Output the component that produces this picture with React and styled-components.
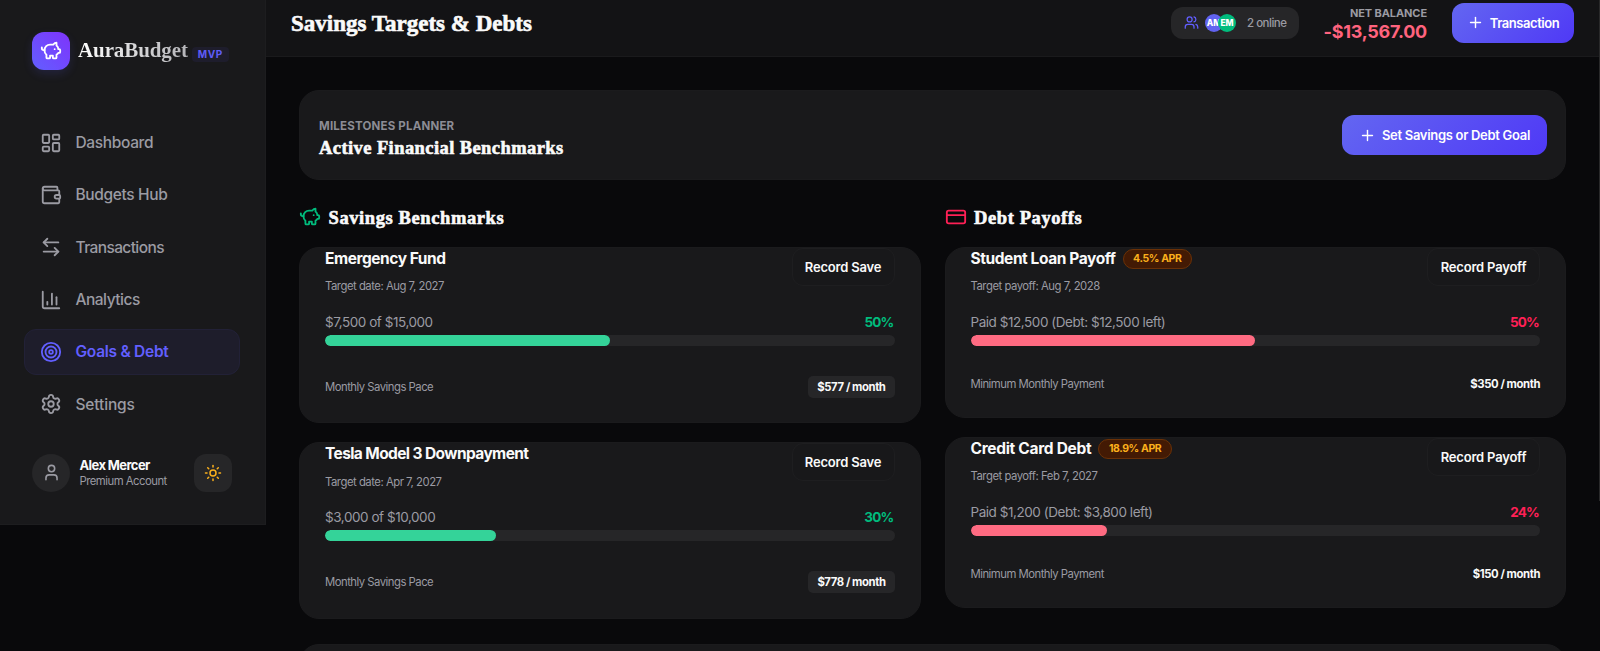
import styled, { createGlobalStyle } from "styled-components";
import {
  ArrowLeftRight,
  ChartColumn,
  CreditCard,
  LayoutDashboard,
  PiggyBank,
  Plus,
  Settings,
  Sun,
  Target,
  User,
  Users,
  Wallet,
} from "lucide-react";

const savings = [
  { id: 1, name: "Emergency Fund", track: "-0.45px", date: "Aug 7, 2027", amount: "$7,500 of $15,000", percent: 50, pace: "$577 / month" },
  { id: 2, name: "Tesla Model 3 Downpayment", track: "-0.6px", date: "Apr 7, 2027", amount: "$3,000 of $10,000", percent: 30, pace: "$778 / month" },
];

const debts = [
  { id: 1, name: "Student Loan Payoff", track: "-0.42px", apr: "4.5% APR", date: "Aug 7, 2028", amount: "Paid $12,500 (Debt: $12,500 left)", percent: 50, pace: "$350 / month" },
  { id: 2, name: "Credit Card Debt", track: "-0.3px", apr: "18.9% APR", date: "Feb 7, 2027", amount: "Paid $1,200 (Debt: $3,800 left)", percent: 24, pace: "$150 / month" },
];

const menu = [
  { label: "Dashboard", Icon: LayoutDashboard },
  { label: "Budgets Hub", Icon: Wallet },
  { label: "Transactions", Icon: ArrowLeftRight, track: "-0.6px" },
  { label: "Analytics", Icon: ChartColumn, track: "-0.5px" },
  { label: "Goals & Debt", Icon: Target, active: true, track: "-0.27px" },
  { label: "Settings", Icon: Settings, track: "-0.15px" },
];

const GoalCard = ({ goal, debt }) => {
  return (
    <Card $debt={debt}>
      <CardHead>
        <div>
          <TitleRow>
            <GoalName $track={goal.track}>{goal.name}</GoalName>
            {goal.apr && <Apr>{goal.apr}</Apr>}
          </TitleRow>
          <TargetDate>{debt ? "Target payoff: " : "Target date: "}{goal.date}</TargetDate>
        </div>
        <RecordButton $debt={debt}>{debt ? "Record Payoff" : "Record Save"}</RecordButton>
      </CardHead>
      <AmountRow>
        <Amount>{goal.amount}</Amount>
        <Percent $debt={debt}>{goal.percent}%</Percent>
      </AmountRow>
      <Track>
        <Fill $debt={debt} style={{ width: `${goal.percent}%` }} />
      </Track>
      <CardFoot>
        <PaceLabel>{debt ? "Minimum Monthly Payment" : "Monthly Savings Pace"}</PaceLabel>
        <Pace $chip={!debt}>{goal.pace}</Pace>
      </CardFoot>
    </Card>
  );
};

const App = () => {
  return (
    <>
      <GlobalStyle />
      <Layout>
        <Sidebar>
          <Brand>
            <Logo><PiggyBank size={22} /></Logo>
            <BrandName>AuraBudget</BrandName>
            <Mvp>MVP</Mvp>
          </Brand>
          <Nav>
            {menu.map(({ label, Icon, active, track }) => (
              <NavItem key={label} $active={active} $track={track}>
                <Icon size={22} />
                <span>{label}</span>
              </NavItem>
            ))}
          </Nav>
          <Profile>
            <Avatar><User size={19} /></Avatar>
            <ProfileText>
              <UserName>Alex Mercer</UserName>
              <UserPlan>Premium Account</UserPlan>
            </ProfileText>
            <ThemeButton><Sun size={18} /></ThemeButton>
          </Profile>
        </Sidebar>

        <Main>
          <Header>
            <PageTitle>Savings Targets &amp; Debts</PageTitle>
            <Online>
              <Users size={15} />
              <People>
                <Person $color="#6163f0">AM</Person>
                <Person $color="#00bc7d">EM</Person>
              </People>
              <OnlineText>2 online</OnlineText>
            </Online>
            <Balance>
              <BalanceLabel>NET BALANCE</BalanceLabel>
              <BalanceValue>-$13,567.00</BalanceValue>
            </Balance>
            <PrimaryButton $width="122px">
              <Plus size={17} />
              <ButtonText $track="-0.45px">Transaction</ButtonText>
            </PrimaryButton>
          </Header>

          <Content>
            <Planner>
              <div>
                <Eyebrow>MILESTONES PLANNER</Eyebrow>
                <PlannerTitle>Active Financial Benchmarks</PlannerTitle>
              </div>
              <PrimaryButton $width="205px">
                <Plus size={17} />
                <ButtonText $track="-0.3px">Set Savings or Debt Goal</ButtonText>
              </PrimaryButton>
            </Planner>

            <Columns>
              <Column>
                <SectionTitle $color="#00bc7d"><PiggyBank size={22} /><h2>Savings Benchmarks</h2></SectionTitle>
                {savings.map((goal) => <GoalCard key={goal.id} goal={goal} />)}
              </Column>
              <Column>
                <SectionTitle $color="#ff2056"><CreditCard size={22} /><h2>Debt Payoffs</h2></SectionTitle>
                {debts.map((goal) => <GoalCard key={goal.id} goal={goal} debt />)}
              </Column>
            </Columns>
            <NextPanel />
          </Content>
          <ScrollThumb />
        </Main>
      </Layout>
    </>
  );
};

const GlobalStyle = createGlobalStyle`
  * {
    box-sizing: border-box;
    margin: 0;
    padding: 0;
  }
  body {
    background: #09090b;
    color: #fafafa;
    font-family: Inter, "Open Sans", sans-serif;
    overflow: hidden;
  }
  svg {
    flex-shrink: 0;
  }
  h1, h2 {
    -webkit-text-stroke: 0.6px currentColor;
  }
`;

const Layout = styled.div`
  display: flex;
  align-items: flex-start;
  height: 651px;
  overflow: hidden;
`;

const Sidebar = styled.aside`
  display: flex;
  flex-direction: column;
  width: 266px;
  height: 524.5px;
  padding: 31px 25px 0 24px;
  background: #19191b;
  border-right: 1px solid #1d1d1f;
  border-bottom: 1px solid #1d1d1f;
`;

const Brand = styled.div`
  display: flex;
  align-items: center;
  height: 39px;
  padding-left: 8px;
`;

const Logo = styled.div`
  display: grid;
  place-items: center;
  width: 38px;
  height: 38px;
  border-radius: 12px;
  color: #fff;
  background: linear-gradient(45deg, #625fff, #7f33fb);
  box-shadow: 0 4px 10px rgba(97, 95, 255, 0.15);
`;

const BrandName = styled.span`
  margin-left: 8px;
  font: bold 21px "Liberation Serif", serif;
  letter-spacing: -0.1px;
  background: linear-gradient(90deg, #fff, #b4b4b8);
  background-clip: text;
  color: transparent;
`;

const Mvp = styled.span`
  margin: 7px 0 0 4px;
  padding: 0 6px;
  border-radius: 4px;
  background: #1e1d2c;
  color: #5f5cf8;
  font-size: 10px;
  font-weight: 700;
  line-height: 15px;
  letter-spacing: 0.5px;
`;

const Nav = styled.nav`
  display: flex;
  flex-direction: column;
  gap: 6.3px;
  margin-top: 49.7px;
`;

const NavItem = styled.a`
  display: flex;
  align-items: center;
  gap: 14px;
  height: 46px;
  padding-left: 14.5px;
  border: 1px solid ${({ $active }) => ($active ? "#222137" : "transparent")};
  border-radius: 12px;
  background: ${({ $active }) => ($active ? "#1e1d2b" : "transparent")};
  color: ${({ $active }) => ($active ? "#625fff" : "#9b9ba3")};
  font-size: 15.5px;
  font-weight: ${({ $active }) => ($active ? 600 : 500)};
  letter-spacing: ${({ $track }) => $track || "-0.35px"};
`;

const Profile = styled.div`
  display: flex;
  align-items: center;
  margin-top: 26.5px;
  padding: 0 8px;
`;

const Avatar = styled.div`
  display: grid;
  place-items: center;
  width: 38px;
  height: 38px;
  border-radius: 50%;
  background: #262628;
  color: #9b9ba3;
`;

const ProfileText = styled.div`
  flex: 1;
  margin-left: 9.5px;
  white-space: nowrap;
`;

const UserName = styled.p`
  font-size: 13px;
  font-weight: 700;
  line-height: 16px;
  letter-spacing: -0.6px;
`;

const UserPlan = styled.p`
  color: #9b9ba3;
  font-size: 11.3px;
  line-height: 16px;
  letter-spacing: -0.5px;
`;

const ThemeButton = styled.button`
  display: grid;
  place-items: center;
  width: 38px;
  height: 38px;
  border: 0;
  border-radius: 12px;
  background: #262628;
  color: #fbb01c;
`;

const Main = styled.main`
  position: relative;
  flex: 1;
  height: 651px;
`;

const Header = styled.header`
  display: flex;
  align-items: center;
  height: 57px;
  padding: 0 26px 11px 25px;
  background: #131315;
  border-bottom: 1px solid #1a1a1c;
`;

const PageTitle = styled.h1`
  margin: 2px auto 0 0;
  font: bold 23px "Liberation Serif", serif;
  letter-spacing: 0;
`;

const Online = styled.div`
  display: flex;
  align-items: center;
  width: 128px;
  height: 32px;
  padding-left: 13px;
  border-radius: 12px;
  background: #262628;
  color: #625fff;
`;

const People = styled.div`
  display: flex;
  margin-left: 6px;
`;

const Person = styled.span`
  width: 18px;
  height: 18px;
  border-radius: 50%;
  background: ${({ $color }) => $color};
  color: #fff;
  font-size: 8.5px;
  font-weight: 800;
  line-height: 18px;
  text-align: center;
  & + & {
    margin-left: -5px;
  }
`;

const OnlineText = styled.span`
  margin-left: 11px;
  color: #9b9ba3;
  font-size: 11.5px;
  font-weight: 500;
  letter-spacing: -0.5px;
`;

const Balance = styled.div`
  width: 128px;
  margin-top: 2px;
  text-align: right;
`;

const BalanceLabel = styled.p`
  color: #9b9ba3;
  font-size: 11px;
  font-weight: 700;
  line-height: 16px;
  letter-spacing: -0.1px;
`;

const BalanceValue = styled.p`
  color: #ff637e;
  font-size: 18px;
  font-weight: 700;
  line-height: 22px;
  letter-spacing: -0.25px;
`;

const PrimaryButton = styled.button`
  display: flex;
  align-items: center;
  justify-content: center;
  gap: 6px;
  width: ${({ $width }) => $width};
  height: 40px;
  margin-left: 25px;
  border: 0;
  border-radius: 12px;
  background: linear-gradient(135deg, #6366f1, #4f39f6);
  color: #fff;
`;

const ButtonText = styled.span`
  font: 600 13px Inter, sans-serif;
  letter-spacing: ${({ $track }) => $track};
  white-space: nowrap;
`;

const Content = styled.div`
  padding: 33px 34px 0 33px;
`;

const Planner = styled.section`
  display: flex;
  align-items: center;
  justify-content: space-between;
  height: 90px;
  padding: 0 18px 0 19px;
  border: 1px solid #1b1b1d;
  border-radius: 20px;
  background: #19191b;
`;

const Eyebrow = styled.p`
  margin-top: 7px;
  color: #8c8c94;
  font-size: 11.5px;
  font-weight: 700;
  line-height: 18px;
  letter-spacing: 0.2px;
`;

const PlannerTitle = styled.h2`
  font: bold 18.5px/26px "Liberation Serif", serif;
  letter-spacing: 0.42px;
`;

const Columns = styled.div`
  display: grid;
  grid-template-columns: 1fr 1fr;
  gap: 24px;
  height: 464px;
  padding-top: 26px;
`;

const Column = styled.div`
  display: flex;
  flex-direction: column;
  gap: 19px;
`;

const SectionTitle = styled.div`
  display: flex;
  align-items: center;
  gap: 7.5px;
  height: 22px;
  color: ${({ $color }) => $color};
  h2 {
    margin-top: 2px;
    color: #fafafa;
    font: bold 18.5px "Liberation Serif", serif;
    letter-spacing: 0.6px;
  }
`;

const Card = styled.article`
  height: ${({ $debt }) => ($debt ? "171px" : "176.4px")};
  flex-shrink: 0;
  padding: 0 25px;
  border: 1px solid #1b1b1d;
  border-radius: 20px;
  background: #19191b;
`;

const CardHead = styled.div`
  display: flex;
  justify-content: space-between;
  height: 48px;
`;

const TitleRow = styled.div`
  display: flex;
  align-items: center;
  gap: 7px;
  height: 21px;
`;

const GoalName = styled.h3`
  font-size: 15.5px;
  font-weight: 700;
  letter-spacing: ${({ $track }) => $track};
  white-space: nowrap;
`;

const Apr = styled.span`
  height: 20px;
  padding: 0 9.5px;
  border: 1px solid #6b3106;
  border-radius: 10px;
  background: #431a04;
  color: #fbb01c;
  font-size: 10.5px;
  font-weight: 700;
  line-height: 18px;
  letter-spacing: -0.4px;
`;

const TargetDate = styled.p`
  margin-top: 8.3px;
  color: #9b9ba3;
  font-size: 11.3px;
  line-height: 18px;
  letter-spacing: -0.48px;
`;

const RecordButton = styled.button`
  width: ${({ $debt }) => ($debt ? "113px" : "103px")};
  height: 38px;
  border: 1px solid #1e1e20;
  border-radius: 11px;
  background: #18181a;
  color: #fafafa;
  font: 600 13px Inter, sans-serif;
  letter-spacing: -0.2px;
`;

const AmountRow = styled.div`
  display: flex;
  justify-content: space-between;
  margin-top: 16px;
  font-size: 13.5px;
  line-height: 20px;
`;

const Amount = styled.span`
  color: #9b9ba3;
  letter-spacing: -0.45px;
`;

const Percent = styled.span`
  padding-right: 1px;
  color: ${({ $debt }) => ($debt ? "#ff2056" : "#00bc7d")};
  font-weight: 700;
  letter-spacing: -0.8px;
`;

const Track = styled.div`
  height: 11px;
  margin-top: 3px;
  border-radius: 6px;
  background: #262628;
  overflow: hidden;
`;

const Fill = styled.div`
  height: 100%;
  border-radius: 6px;
  background: ${({ $debt }) => ($debt ? "#ff6b82" : "#34d399")};
`;

const CardFoot = styled.div`
  display: flex;
  align-items: center;
  justify-content: space-between;
  margin-top: 30px;
  font-size: 11.3px;
  line-height: 16px;
`;

const PaceLabel = styled.span`
  color: #9b9ba3;
  letter-spacing: -0.5px;
`;

const Pace = styled.span`
  padding: ${({ $chip }) => ($chip ? "3px 9px" : "0")};
  border-radius: 5px;
  background: ${({ $chip }) => ($chip ? "#262628" : "transparent")};
  font-weight: 700;
  letter-spacing: -0.42px;
`;

const NextPanel = styled.section`
  height: 60px;
  border: 1px solid #1b1b1d;
  border-radius: 20px;
  background: #19191b;
`;

const ScrollThumb = styled.div`
  position: absolute;
  top: 0;
  right: 0;
  width: 1px;
  height: 501px;
  background: #29292a;
`;

export default App;
